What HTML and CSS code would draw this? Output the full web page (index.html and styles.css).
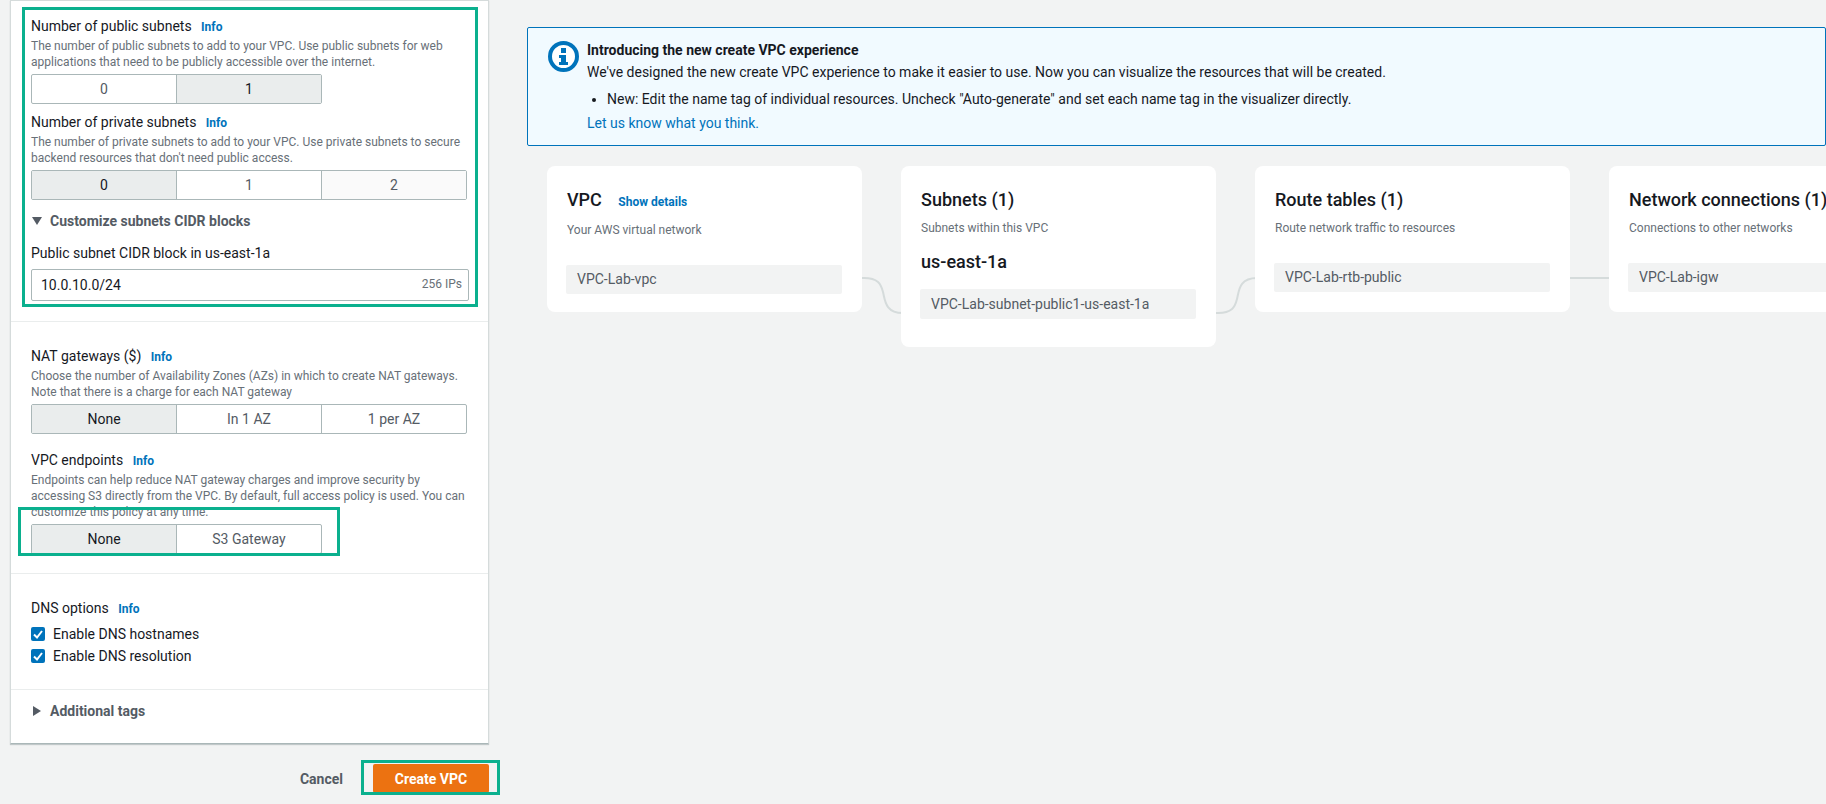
FILE: index.html
```html
<!DOCTYPE html>
<html lang="en">
<head>
    <meta charset="UTF-8">
    <title>Create VPC</title>
    <link rel="stylesheet" href="styles.css">
</head>
<body>
    <div class="page">
        <div class="left-col">
            <div class="panel">
                <section class="section section-subnets">
                    <div class="label">Number of public subnets <a class="info">Info</a></div>
                    <p class="desc">The number of public subnets to add to your VPC. Use public subnets for web applications that need to be publicly accessible over the internet.</p>
                    <div class="seg seg-two">
                        <span class="seg-item">0</span>
                        <span class="seg-item selected">1</span>
                    </div>
                    <div class="label label-next">Number of private subnets <a class="info">Info</a></div>
                    <p class="desc">The number of private subnets to add to your VPC. Use private subnets to secure backend resources that don't need public access.</p>
                    <div class="seg seg-three">
                        <span class="seg-item selected">0</span>
                        <span class="seg-item">1</span>
                        <span class="seg-item faint">2</span>
                    </div>
                    <div class="expander expander-open">
                        <svg class="caret" width="12" height="10" viewBox="0 0 12 10"><path d="M1 1h10L6 9z" fill="#545b64"/></svg>
                        Customize subnets CIDR blocks
                    </div>
                    <div class="label label-cidr">Public subnet CIDR block in us-east-1a</div>
                    <div class="cidr">
                        <input class="cidr-input" type="text" value="10.0.10.0/24">
                        <span class="cidr-count">256 IPs</span>
                    </div>
                </section>

                <section class="section section-gateways">
                    <div class="label">NAT gateways ($) <a class="info">Info</a></div>
                    <p class="desc">Choose the number of Availability Zones (AZs) in which to create NAT gateways. Note that there is a charge for each NAT gateway</p>
                    <div class="seg seg-three">
                        <span class="seg-item selected">None</span>
                        <span class="seg-item">In 1 AZ</span>
                        <span class="seg-item">1 per AZ</span>
                    </div>
                    <div class="label label-endpoints">VPC endpoints <a class="info">Info</a></div>
                    <p class="desc">Endpoints can help reduce NAT gateway charges and improve security by accessing S3 directly from the VPC. By default, full access policy is used. You can customize this policy at any time.</p>
                    <div class="seg seg-two">
                        <span class="seg-item selected">None</span>
                        <span class="seg-item">S3 Gateway</span>
                    </div>
                </section>

                <section class="section section-dns">
                    <div class="label">DNS options <a class="info">Info</a></div>
                    <label class="check">
                        <svg width="14" height="14" viewBox="0 0 14 14"><rect width="14" height="14" rx="2" fill="#0073bb"/><path d="M3 7.5l3 3 5-6.5" fill="none" stroke="#fff" stroke-width="2"/></svg>
                        Enable DNS hostnames
                    </label>
                    <label class="check">
                        <svg width="14" height="14" viewBox="0 0 14 14"><rect width="14" height="14" rx="2" fill="#0073bb"/><path d="M3 7.5l3 3 5-6.5" fill="none" stroke="#fff" stroke-width="2"/></svg>
                        Enable DNS resolution
                    </label>
                </section>

                <section class="section section-tags">
                    <div class="expander">
                        <svg class="caret" width="12" height="12" viewBox="0 0 12 12"><path d="M2 1l8 5-8 5z" fill="#545b64"/></svg>
                        Additional tags
                    </div>
                </section>
            </div>

            <div class="actions">
                <a class="cancel">Cancel</a>
                <button class="primary" type="button">Create VPC</button>
            </div>
        </div>

        <div class="right-col">
            <div class="flash">
                <svg class="flash-icon" width="31" height="31" viewBox="0 0 31 31">
                    <circle cx="15.5" cy="15.5" r="13.5" fill="#fff" stroke="#0073bb" stroke-width="4"/>
                    <rect x="13" y="7" width="5" height="5" fill="#0073bb"/>
                    <path d="M11 14h7v7h2v3H11v-3h2v-4h-2z" fill="#0073bb"/>
                </svg>
                <div class="flash-body">
                    <div class="flash-title">Introducing the new create VPC experience</div>
                    <div class="flash-text">We've designed the new create VPC experience to make it easier to use. Now you can visualize the resources that will be created.</div>
                    <ul class="flash-list">
                        <li>New: Edit the name tag of individual resources. Uncheck "Auto-generate" and set each name tag in the visualizer directly.</li>
                    </ul>
                    <a class="flash-link">Let us know what you think.</a>
                </div>
            </div>

            <div class="diagram">
                <svg class="links" width="1300" height="200" viewBox="0 0 1300 200">
                    <path d="M295 112h22c14 0 17 6 19 14s2 21 20 21h19" />
                    <path d="M649 147h22c14 0 17-6 19-14s2-21 20-21h19" />
                    <path d="M1003 112h79" />
                </svg>
                <div class="card">
                    <div class="card-title">VPC <a class="card-link">Show details</a></div>
                    <div class="card-sub">Your AWS virtual network</div>
                    <div class="node">VPC-Lab-vpc</div>
                </div>
                <div class="card">
                    <div class="card-title">Subnets (1)</div>
                    <div class="card-sub">Subnets within this VPC</div>
                    <div class="zone">us-east-1a</div>
                    <div class="node node-subnet">VPC-Lab-subnet-public1-us-east-1a</div>
                </div>
                <div class="card">
                    <div class="card-title">Route tables (1)</div>
                    <div class="card-sub">Route network traffic to resources</div>
                    <div class="node">VPC-Lab-rtb-public</div>
                </div>
                <div class="card">
                    <div class="card-title">Network connections (1)</div>
                    <div class="card-sub">Connections to other networks</div>
                    <div class="node">VPC-Lab-igw</div>
                </div>
            </div>
        </div>

        <!-- green highlight frames drawn over the screenshot -->
        <div class="mark mark-subnets"></div>
        <div class="mark mark-endpoints"></div>
        <div class="mark mark-create"></div>
    </div>
</body>
</html>
```

FILE: styles.css
```css
* {
    box-sizing: border-box;
}

body {
    margin: 0;
    background-color: #f2f3f3;
    color: #16191f;
    font-family: "Roboto", "Liberation Sans", sans-serif;
    font-size: 14px;
}

.page {
    position: relative;
    display: flex;
    height: 804px;
    overflow: hidden;
}

.left-col {
    flex: none;
    width: 489px;
    padding-left: 10px;
}

.panel {
    height: 744px;
    background-color: #fff;
    border: 1px solid #d5dbdb;
    border-bottom-color: #aab7b8;
    box-shadow: 0 1px 1px rgba(0, 28, 36, 0.2);
}

.section {
    padding: 0 20px;
    border-bottom: 1px solid #eaeded;
}

.section-subnets {
    height: 321px;
    padding-top: 14px;
}

.section-gateways {
    height: 252px;
    padding-top: 23px;
}

.section-dns {
    height: 116px;
    padding-top: 23px;
}

.section-tags {
    border-bottom: none;
    padding-top: 10px;
}

.label {
    line-height: 22px;
}

.label-next {
    margin-top: 7px;
}

.label-cidr {
    margin-top: 10px;
}

.label-endpoints {
    margin-top: 15px;
}

.info {
    margin-left: 6px;
    color: #0073bb;
    font-size: 12px;
    font-weight: 700;
}

.desc {
    margin: 0;
    width: 438px;
    color: #687078;
    font-size: 12px;
    line-height: 16px;
}

.seg {
    display: flex;
    height: 30px;
    margin-top: 4px;
    background-color: #fff;
    border: 1px solid #aab7b8;
    border-radius: 2px;
}

.seg-two {
    width: 291px;
}

.seg-three {
    width: 436px;
}

.seg-item {
    flex: 1;
    display: flex;
    align-items: center;
    justify-content: center;
    color: #545b64;
    border-left: 1px solid #aab7b8;
}

.seg-item:first-child {
    border-left: none;
}

.seg-item.selected {
    background-color: #eaeded;
    color: #16191f;
}

.seg-item.faint {
    background-color: #fafafa;
}

.expander {
    display: flex;
    align-items: center;
    gap: 7px;
    color: #545b64;
    font-weight: 700;
    line-height: 22px;
}

.expander-open {
    margin-top: 10px;
}

.caret {
    flex: none;
}

.cidr {
    position: relative;
    margin-top: 5px;
    width: 438px;
}

.cidr-input {
    display: block;
    width: 100%;
    height: 32px;
    padding: 0 9px;
    color: #16191f;
    font-family: inherit;
    font-size: 14px;
    border: 1px solid #aab7b8;
    border-radius: 2px;
}

.cidr-count {
    position: absolute;
    top: 8px;
    right: 7px;
    color: #687078;
    font-size: 12px;
}

.check {
    display: flex;
    align-items: center;
    gap: 8px;
    height: 22px;
}

.section-dns .label {
    margin-bottom: 3px;
}

.actions {
    display: flex;
    align-items: center;
    justify-content: flex-end;
    gap: 30px;
    margin-top: 20px;
}

.cancel {
    color: #545b64;
    font-weight: 700;
}

.primary {
    width: 116px;
    height: 29px;
    padding: 0;
    color: #fff;
    font-family: inherit;
    font-size: 14px;
    font-weight: 700;
    background-color: #ec7211;
    border: none;
    border-radius: 2px;
}

.right-col {
    flex: 1;
    min-width: 0;
    padding: 27px 0 0 38px;
}

.flash {
    display: flex;
    gap: 8px;
    height: 119px;
    padding: 13px 20px;
    background-color: #f1faff;
    border: 1px solid #0073bb;
    border-radius: 2px;
}

.flash-icon {
    flex: none;
}

.flash-title {
    font-weight: 700;
    line-height: 18px;
}

.flash-text {
    margin-top: 2px;
    line-height: 22px;
}

.flash-list {
    margin: 5px 0;
    padding-left: 20px;
    line-height: 22px;
}

.flash-link {
    color: #0073bb;
}

.diagram {
    position: relative;
    display: flex;
    align-items: flex-start;
    gap: 39px;
    margin: 20px 0 0 20px;
}

.links {
    position: absolute;
    top: 0;
    left: 0;
}

.links path {
    fill: none;
    stroke: #d5dbdb;
    stroke-width: 2;
}

.card {
    position: relative;
    flex: none;
    width: 315px;
    height: 146px;
    padding: 22px 20px 0;
    background-color: #fff;
    border-radius: 8px;
}

.card:nth-child(3) {
    height: 181px;
}

.card-title {
    font-size: 18px;
    font-weight: 500;
    line-height: 24px;
}

.card-link {
    margin-left: 12px;
    color: #0073bb;
    font-size: 12px;
    font-weight: 700;
}

.card-sub {
    margin-top: 8px;
    color: #687078;
    font-size: 12px;
    line-height: 16px;
}

.zone {
    margin-top: 14px;
    font-size: 18px;
    font-weight: 500;
    line-height: 24px;
}

.node {
    width: 276px;
    height: 29px;
    margin: 27px 0 0 -1px;
    padding-left: 11px;
    color: #545b64;
    line-height: 29px;
    background-color: #f2f3f3;
    border-radius: 2px;
}

.node-subnet {
    height: 30px;
    margin-top: 15px;
    line-height: 30px;
}

.mark {
    position: absolute;
    border: 3px solid #0bb08e;
}

.mark-subnets {
    left: 22px;
    top: 7px;
    width: 456px;
    height: 300px;
}

.mark-endpoints {
    left: 18px;
    top: 507px;
    width: 322px;
    height: 49px;
}

.mark-create {
    left: 361px;
    top: 760px;
    width: 139px;
    height: 35px;
}
```
